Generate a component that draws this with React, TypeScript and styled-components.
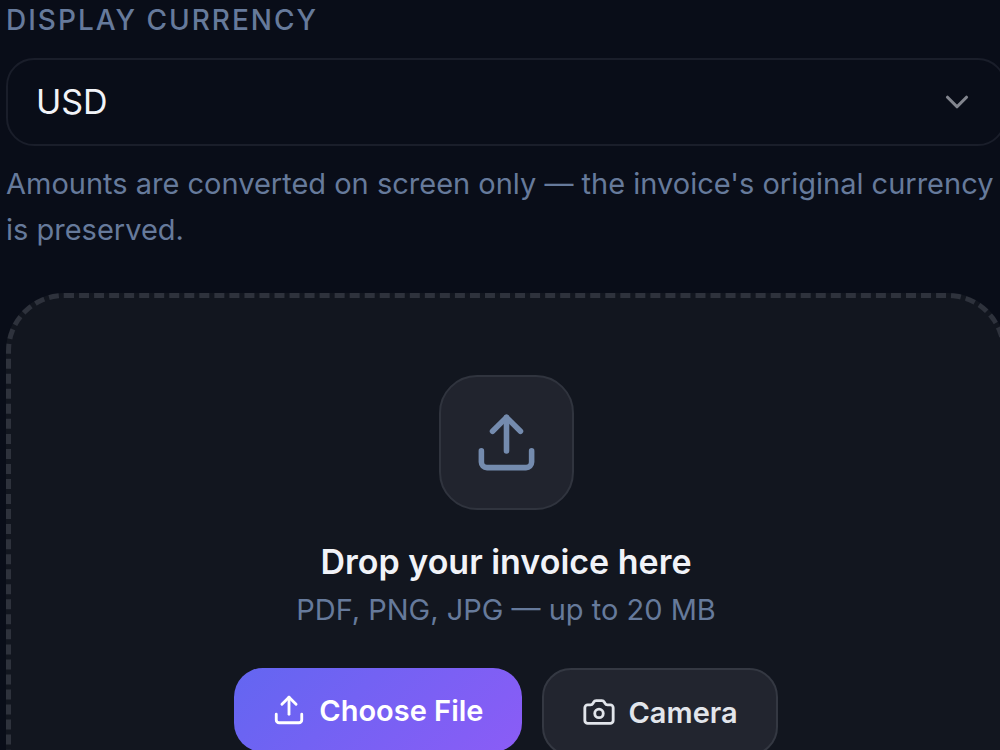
import React from 'react';
import styled, { createGlobalStyle } from 'styled-components';
import { Camera, ChevronDown, Upload } from 'lucide-react';

const GlobalStyle = createGlobalStyle`
  *, *::before, *::after { box-sizing: border-box; }
  body {
    margin: 0;
    background: #090d18;
    color: #f1f3f8;
    font-family: Inter, "Liberation Sans", sans-serif;
    -webkit-font-smoothing: antialiased;
  }
`;

const Page = styled.main`
  height: 100vh;
  overflow: hidden;
`;

const Content = styled.div`
  display: flex;
  flex-direction: column;
  margin-left: 6px;
  margin-right: -6px;
`;

const FieldLabel = styled.label`
  font-size: 28px;
  line-height: 40px;
  font-weight: 500;
  letter-spacing: 2px;
  text-transform: uppercase;
  color: #667a9b;
`;

const SelectWrap = styled.div`
  display: grid;
  align-items: center;
  margin-top: 18px;
`;

const Select = styled.select`
  grid-area: 1 / 1;
  appearance: none;
  width: 100%;
  height: 88px;
  padding: 0 28px 2px;
  border: 2px solid #1a1e2a;
  border-radius: 28px;
  background: #090d18;
  color: #f1f3f8;
  font-family: inherit;
  font-size: 34px;
`;

const SelectArrow = styled(ChevronDown)`
  grid-area: 1 / 1;
  justify-self: end;
  margin-right: 30px;
  color: #82858e;
  pointer-events: none;
`;

const Hint = styled.p`
  margin: 15px 0 0;
  padding-right: 12px;
  font-size: 29px;
  line-height: 46px;
  color: #667a9b;
`;

const DropZone = styled.section`
  display: flex;
  flex-direction: column;
  align-items: center;
  margin-top: 40px;
  padding: 77px 40px;
  border: 5px dashed #2e323c;
  border-radius: 58px;
  background: #12161f;
`;

const IconTile = styled.div`
  display: grid;
  place-items: center;
  width: 135px;
  height: 135px;
  border: 2px solid #30343e;
  border-radius: 38px;
  background: #21242e;
  color: #748bae;
`;

const Title = styled.h2`
  margin: 28px 0 0;
  font-size: 34px;
  line-height: 48px;
  font-weight: 600;
`;

const Formats = styled.p`
  margin: 4px 0 0;
  font-size: 29px;
  line-height: 40px;
  color: #667a9b;
`;

const Actions = styled.div`
  display: flex;
  gap: 20px;
  margin-top: 38px;
`;

const Button = styled.button<{ $primary?: boolean }>`
  display: flex;
  align-items: center;
  gap: 13px;
  height: ${p => (p.$primary ? 84 : 88)}px;
  padding: 0 38px;
  border: ${p => (p.$primary ? '0' : '2px solid #343842')};
  border-radius: 29px;
  background: ${p => (p.$primary ? 'linear-gradient(135deg, #6366f1, #8b5cf6)' : '#22252f')};
  color: ${p => (p.$primary ? '#ffffff' : '#e2e5eb')};
  font-family: inherit;
  font-size: 29px;
  font-weight: 600;
`;

export default function App() {
  return (
    <>
      <GlobalStyle />
      <Page>
        <Content>
          <FieldLabel htmlFor="currency">Display currency</FieldLabel>
          <SelectWrap>
            <Select id="currency" defaultValue="USD" aria-describedby="currency-hint">
              <option>USD</option>
            </Select>
            <SelectArrow size={38} strokeWidth={2} aria-hidden />
          </SelectWrap>
          <Hint id="currency-hint">
            Amounts are converted on screen only — the invoice's original currency is preserved.
          </Hint>
          <DropZone>
            <IconTile>
              <Upload size={67} strokeWidth={2} aria-hidden />
            </IconTile>
            <Title>Drop your invoice here</Title>
            <Formats>PDF, PNG, JPG — up to 20 MB</Formats>
            <Actions>
              <Button type="button" $primary>
                <Upload size={34} strokeWidth={2} aria-hidden />
                Choose File
              </Button>
              <Button type="button">
                <Camera size={34} strokeWidth={2} aria-hidden />
                Camera
              </Button>
            </Actions>
          </DropZone>
        </Content>
      </Page>
    </>
  );
}
